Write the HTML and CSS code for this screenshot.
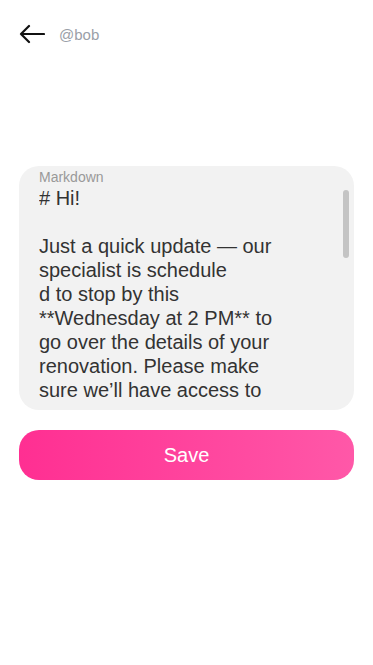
FILE: index.html
```html
<!DOCTYPE html>
<html>
<head>
<meta charset="utf-8">
<link rel="stylesheet" href="styles.css">
</head>
<body>
<div class="page">
  <header class="top">
    <svg class="back" width="26" height="20" viewBox="0 0 26 20" fill="none" stroke="#111" stroke-width="2.2" stroke-linecap="round" stroke-linejoin="round">
      <path d="M25 10H2M10 2L2 10L10 18"/>
    </svg>
    <span class="handle">@bob</span>
  </header>
  <section class="card">
    <div class="label">Markdown</div>
    <div class="editor">
      <div class="text"># Hi!

Just a quick update — our
specialist is schedule
d to stop by this
**Wednesday at 2 PM** to
go over the details of your
renovation. Please make
sure we’ll have access to</div>
    </div>
    <div class="thumb"></div>
  </section>
  <button class="save">Save</button>
</div>
</body>
</html>
```
FILE: styles.css
```css
html, body {
  margin: 0;
  padding: 0;
  background: #fff;
  font-family: "Liberation Sans", Arial, sans-serif;
}
.page {
  padding: 0 19px;
}
.top {
  display: flex;
  align-items: center;
  height: 48px;
  padding-top: 10px;
  gap: 14px;
}
.back {
  display: block;
}
.handle {
  font-size: 15px;
  color: #9aa0a8;
}
.card {
  position: relative;
  margin-top: 108px;
  background: #f2f2f2;
  border-radius: 20px;
  padding: 3px 20px 8px 20px;
  height: 233px;
}
.label {
  font-size: 14px;
  line-height: 17px;
  color: #999;
}
.editor {
  height: 216px;
  overflow: hidden;
}
.text {
  white-space: pre;
  font-size: 20px;
  line-height: 24px;
  color: #333;
}
.thumb {
  position: absolute;
  right: 5px;
  top: 24px;
  width: 6px;
  height: 68px;
  border-radius: 3px;
  background: #c4c4c4;
}
.save {
  display: block;
  width: 100%;
  margin-top: 20px;
  height: 50px;
  border: none;
  border-radius: 20px;
  background: linear-gradient(90deg, #ff2f92, #ff58a8);
  color: #fff;
  font-family: "Liberation Sans", Arial, sans-serif;
  font-size: 20px;
}
```
